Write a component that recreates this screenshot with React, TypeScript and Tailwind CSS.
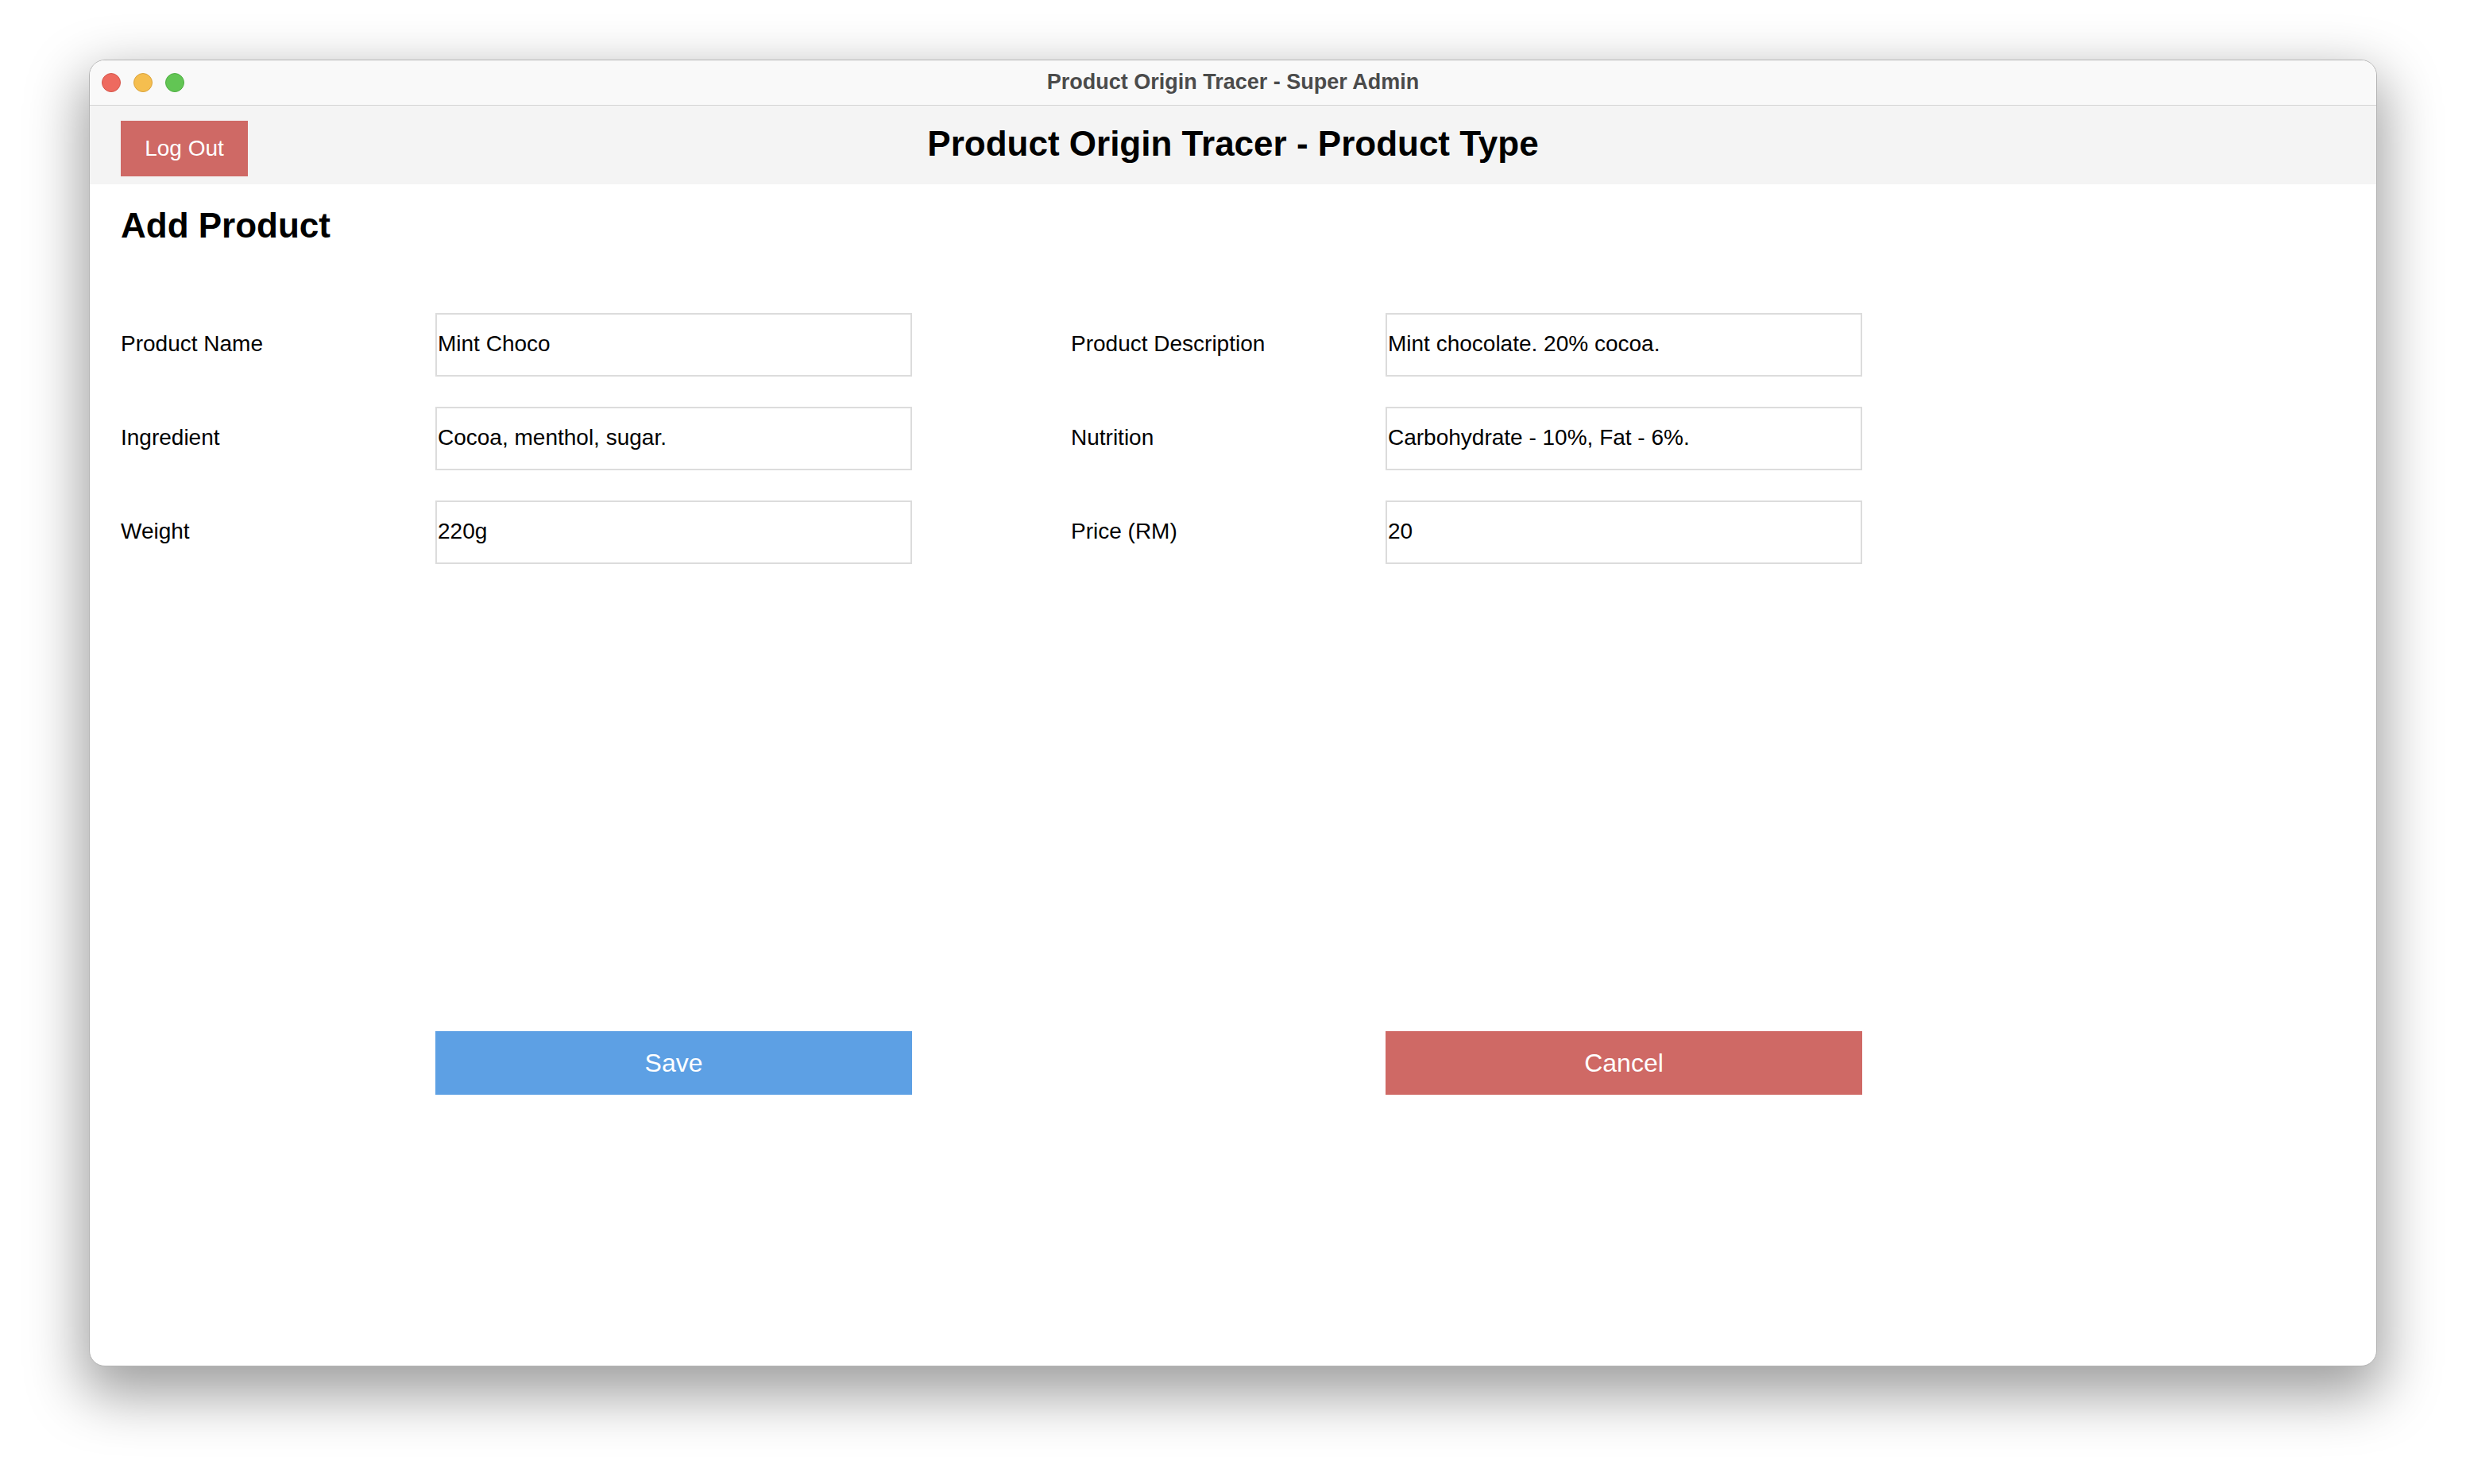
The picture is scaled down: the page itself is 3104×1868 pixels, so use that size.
import { Fragment, useState } from "react";

interface Field {
  label: string;
  value: string;
}

const leftFields: Field[] = [
  { label: "Product Name", value: "Mint Choco" },
  { label: "Ingredient", value: "Cocoa, menthol, sugar." },
  { label: "Weight", value: "220g" },
];

const rightFields: Field[] = [
  { label: "Product Description", value: "Mint chocolate. 20% cocoa." },
  { label: "Nutrition", value: "Carbohydrate - 10%, Fat - 6%." },
  { label: "Price (RM)", value: "20" },
];

function FieldInput({ value }: { value: string }) {
  const [text, setText] = useState(value);
  return (
    <input
      type="text"
      value={text}
      onChange={(e) => setText(e.target.value)}
      className="w-[600px] h-[80px] border-2 border-[#dcdcdc] bg-white pl-[1px] pb-[3px] text-[28px] text-black outline-none"
    />
  );
}

export default function App() {
  return (
    <div className="w-[3104px] h-[1868px] bg-white flex justify-center pt-[75px] font-['Liberation_Sans',Arial,sans-serif]">
      <div className="w-[2880px] h-[1645px] flex flex-col rounded-[20px] overflow-hidden border border-[#b4b4b4] bg-white shadow-[0_28px_70px_8px_rgba(0,0,0,0.38)]">
        {/* Title bar */}
        <div className="h-[57px] shrink-0 grid grid-cols-[1fr_auto_1fr] items-center bg-[#f9f9f9] border-b border-[#d4d4d4]">
          <div className="flex items-center gap-[16px] pl-[15px]">
            <span className="w-[24px] h-[24px] rounded-full bg-[#ee6a5f] border border-[#d5574c]" />
            <span className="w-[24px] h-[24px] rounded-full bg-[#f5be4f] border border-[#d9a33c]" />
            <span className="w-[24px] h-[24px] rounded-full bg-[#62c554] border border-[#4fae43]" />
          </div>
          <div className="text-[27px] font-bold text-[#4b4b4b] pb-[2px]">Product Origin Tracer - Super Admin</div>
          <div />
        </div>

        {/* Header */}
        <div className="h-[99px] shrink-0 grid grid-cols-[1fr_auto_1fr] items-center bg-[#f4f4f4] px-[39px]">
          <div className="self-start pt-[19px]">
            <button className="w-[160px] h-[70px] bg-[#cf6965] text-white text-[28px]">Log Out</button>
          </div>
          <h1 className="text-[44px] font-bold text-black leading-[50px] pb-[4px]">Product Origin Tracer - Product Type</h1>
          <div />
        </div>

        {/* Content */}
        <div className="flex-1 px-[39px] pt-[27px]">
          <h2 className="text-[44px] font-bold text-black leading-[50px]">Add Product</h2>

          <div className="mt-[85px] grid grid-cols-[396px_600px_200px_396px_600px] auto-rows-[80px] gap-y-[38px] items-center">
            {leftFields.map((field, i) => (
              <Fragment key={field.label}>
                <div className="text-[28px] text-black pb-[3px]">{field.label}</div>
                <FieldInput value={field.value} />
                <div />
                <div className="text-[28px] text-black pb-[3px]">{rightFields[i].label}</div>
                <FieldInput value={rightFields[i].value} />
              </Fragment>
            ))}
          </div>

          <div className="mt-[588px] grid grid-cols-[396px_600px_200px_396px_600px]">
            <div />
            <button className="h-[80px] bg-[#5da0e4] text-white text-[32px]">Save</button>
            <div />
            <div />
            <button className="h-[80px] bg-[#cf6965] text-white text-[32px]">Cancel</button>
          </div>
        </div>
      </div>
    </div>
  );
}
